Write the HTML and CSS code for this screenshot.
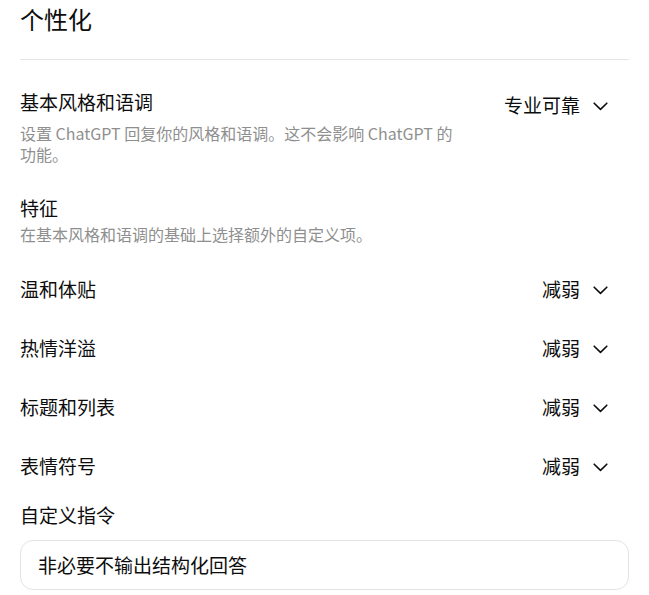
FILE: index.html
```html
<!DOCTYPE html>
<html lang="zh-CN">
<head>
<meta charset="utf-8">
<title>个性化</title>
<link rel="stylesheet" href="styles.css">
</head>
<body>
<main class="panel">
  <header class="panel-header">
    <h1 class="panel-title">个性化</h1>
  </header>

  <section class="setting setting-base">
    <div class="setting-text">
      <div class="setting-label">基本风格和语调</div>
      <p class="setting-desc desc-base">设置 ChatGPT 回复你的风格和语调。这不会影响 ChatGPT 的功能。</p>
    </div>
    <button class="select select-base" type="button">
      <span>专业可靠</span>
      <svg class="chev" width="15" height="9" viewBox="0 0 15 9" aria-hidden="true"><path d="M1.2 1.2 L7.5 7.4 L13.8 1.2" fill="none" stroke="#0d0d0d" stroke-width="1.6" stroke-linecap="round" stroke-linejoin="round"/></svg>
    </button>
  </section>

  <section class="traits">
    <div class="setting-label">特征</div>
    <p class="setting-desc desc-traits">在基本风格和语调的基础上选择额外的自定义项。</p>
  </section>

  <div class="trait-list">
    <div class="trait-row">
      <span class="setting-label">温和体贴</span>
      <button class="select" type="button"><span>减弱</span><svg class="chev" width="15" height="9" viewBox="0 0 15 9" aria-hidden="true"><path d="M1.2 1.2 L7.5 7.4 L13.8 1.2" fill="none" stroke="#0d0d0d" stroke-width="1.6" stroke-linecap="round" stroke-linejoin="round"/></svg></button>
    </div>
    <div class="trait-row">
      <span class="setting-label">热情洋溢</span>
      <button class="select" type="button"><span>减弱</span><svg class="chev" width="15" height="9" viewBox="0 0 15 9" aria-hidden="true"><path d="M1.2 1.2 L7.5 7.4 L13.8 1.2" fill="none" stroke="#0d0d0d" stroke-width="1.6" stroke-linecap="round" stroke-linejoin="round"/></svg></button>
    </div>
    <div class="trait-row">
      <span class="setting-label">标题和列表</span>
      <button class="select" type="button"><span>减弱</span><svg class="chev" width="15" height="9" viewBox="0 0 15 9" aria-hidden="true"><path d="M1.2 1.2 L7.5 7.4 L13.8 1.2" fill="none" stroke="#0d0d0d" stroke-width="1.6" stroke-linecap="round" stroke-linejoin="round"/></svg></button>
    </div>
    <div class="trait-row">
      <span class="setting-label">表情符号</span>
      <button class="select" type="button"><span>减弱</span><svg class="chev" width="15" height="9" viewBox="0 0 15 9" aria-hidden="true"><path d="M1.2 1.2 L7.5 7.4 L13.8 1.2" fill="none" stroke="#0d0d0d" stroke-width="1.6" stroke-linecap="round" stroke-linejoin="round"/></svg></button>
    </div>
  </div>

  <section class="custom">
    <div class="setting-label">自定义指令</div>
    <div class="instruction-box">非必要不输出结构化回答</div>
  </section>
</main>
</body>
</html>
```

FILE: styles.css
```css
html, body {
  margin: 0;
  padding: 0;
  background: #ffffff;
}

body {
  font-family: "Noto Sans CJK SC", "Noto Sans", "Liberation Sans", sans-serif;
  color: #0d0d0d;
}

.panel {
  padding: 0 20px;
}

.panel-header {
  padding-bottom: 21px;
  border-bottom: 1px solid #e5e5e5;
}

.panel-title {
  margin: 0;
  font-size: 24px;
  font-weight: 400;
  line-height: 38px;
}

.setting-label {
  font-size: 19px;
  line-height: 28px;
}

.setting-desc {
  margin: 0;
  font-size: 16px;
  line-height: 21px;
  color: #8f8f8f;
}

.setting-base {
  display: flex;
  justify-content: space-between;
  align-items: flex-start;
  margin-top: 28px;
}

.setting-text {
  width: 446px;
}

.desc-base {
  margin-top: 7px;
}

.select {
  display: flex;
  align-items: center;
  gap: 13px;
  padding: 0 21px 0 0;
  margin: 0;
  border: 0;
  background: transparent;
  font: inherit;
  font-size: 19px;
  line-height: 28px;
  color: #0d0d0d;
}

.select-base {
  margin-top: 3px;
}

.chev {
  display: block;
  margin-top: 2px;
}

.traits {
  margin-top: 29px;
}

.desc-traits {
  margin-top: 2px;
}

.trait-list {
  margin-top: 14px;
}

.trait-row {
  display: flex;
  justify-content: space-between;
  align-items: center;
  padding: 16px 0 15px;
}

.custom {
  margin-top: 6px;
}

.instruction-box {
  margin-top: 11px;
  border: 1px solid #e3e3e3;
  border-radius: 13px;
  padding: 10px 17px;
  font-size: 19px;
  line-height: 28px;
}
```
